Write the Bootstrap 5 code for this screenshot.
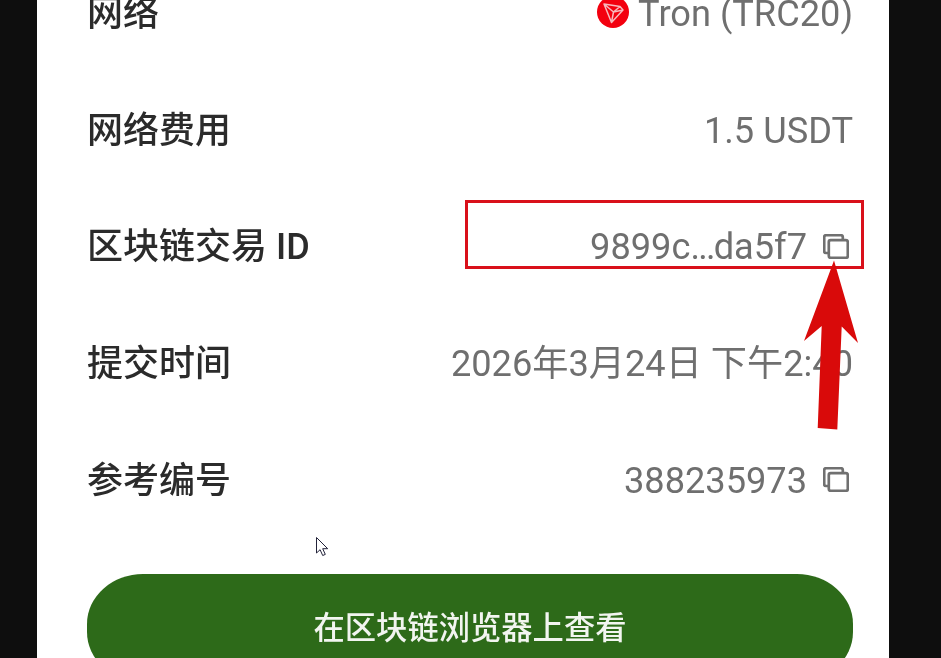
<!doctype html>
<html lang="zh">
<head>
<meta charset="utf-8">
<title>交易详情</title>
<link href="https://cdn.jsdelivr.net/npm/bootstrap@5.3.0/dist/css/bootstrap.min.css" rel="stylesheet">
<style>
html,body{height:100%;overflow:hidden;background:#0e0e0e;}
body{font-family:Roboto,"Noto Sans CJK SC",sans-serif;}
.stage{width:941px;height:658px;overflow:hidden;position:relative;}
.sheet{display:flow-root;width:852px;margin-left:37px;height:100%;background:#fff;padding:0 36px 0 50px;}
.rows{margin-top:-44px;filter:blur(.7px);}
.info-row{height:116.6px;}
.info-label{font-size:36px;font-weight:500;color:#2b2b2b;line-height:1;}
.info-value{font-size:36.2px;color:#6f6f6f;line-height:1;gap:16px;}
.dots{letter-spacing:-1.8px;}
.copy-ico{width:26px;height:25px;flex:none;margin:-2px 4px 0 0;}
.tron-ico{width:32px;height:32px;flex:none;margin:-4px -7px 0 0;}
.view-btn{height:108px;margin-top:35px;border-radius:56px/50px;background:#2d6a19;border:0;color:#f2f5f0;font-size:31.3px;font-weight:500;width:766px;filter:blur(.5px);padding:2px 0 0;}
.mark-box{position:absolute;left:465px;top:200px;width:399px;height:69px;border:3px solid #d9101a;}
.arrow-ov{position:absolute;left:0;top:0;pointer-events:none;}
</style>
</head>
<body>
<div class="stage">
  <div class="sheet">
    <div class="rows">
      <div class="info-row d-flex justify-content-between align-items-center">
        <span class="info-label">网络</span>
        <span class="info-value d-flex align-items-center">
          <svg class="tron-ico" viewBox="0 0 32 32"><circle cx="16" cy="16" r="16" fill="#f3000f"/><path d="M7 8 23 10.500 26 14 14.500 26.500ZM7 8 16.500 16 14.500 26.500M16.500 16 26 14M16.500 16 23 10.500" fill="none" stroke="#f7b9bd" stroke-width="1.500" stroke-linejoin="round"/></svg>
          <span>Tron (TRC20)</span>
        </span>
      </div>
      <div class="info-row d-flex justify-content-between align-items-center">
        <span class="info-label">网络费用</span>
        <span class="info-value d-flex align-items-center"><span>1.5 USDT</span></span>
      </div>
      <div class="info-row d-flex justify-content-between align-items-center">
        <span class="info-label">区块链交易 ID</span>
        <span class="info-value d-flex align-items-center"><span>9899c<span class="dots">...</span>da5f7</span>
          <svg class="copy-ico" viewBox="0 0 26 25" fill="none" stroke="#707070" stroke-width="2.700"><path d="M5 19H3a1.800 1.800 0 0 1-1.800-1.800V3A1.800 1.800 0 0 1 3 1.200h15A1.800 1.800 0 0 1 19.800 3v2"/><rect x="5.800" y="6.200" width="19" height="17.600" rx="1.800"/></svg>
        </span>
      </div>
      <div class="info-row d-flex justify-content-between align-items-center">
        <span class="info-label">提交时间</span>
        <span class="info-value d-flex align-items-center"><span>2026年3月24日 下午2:40</span></span>
      </div>
      <div class="info-row d-flex justify-content-between align-items-center">
        <span class="info-label">参考编号</span>
        <span class="info-value d-flex align-items-center"><span>388235973</span>
          <svg class="copy-ico" viewBox="0 0 26 25" fill="none" stroke="#707070" stroke-width="2.700"><path d="M5 19H3a1.800 1.800 0 0 1-1.800-1.800V3A1.800 1.800 0 0 1 3 1.200h15A1.800 1.800 0 0 1 19.800 3v2"/><rect x="5.800" y="6.200" width="19" height="17.600" rx="1.800"/></svg>
        </span>
      </div>
    </div>
    <button type="button" class="btn view-btn d-block">在区块链浏览器上查看</button>
  </div>
  <div class="mark-box"></div>
  <svg class="arrow-ov" width="941" height="658" viewBox="0 0 941 658">
    <polygon points="834,260.500 858,343 841.700,326.500 837.300,429.500 817.700,428 821.700,326 804,341" fill="#d90a0a"/>
    <path d="M316.500 537.500V553l3.600-3.300 2.600 5.800 2.600-1.100-2.600-5.700h5z" fill="#fff" stroke="#23233a" stroke-width="1" stroke-linejoin="round"/>
  </svg>
</div>
</body>
</html>
